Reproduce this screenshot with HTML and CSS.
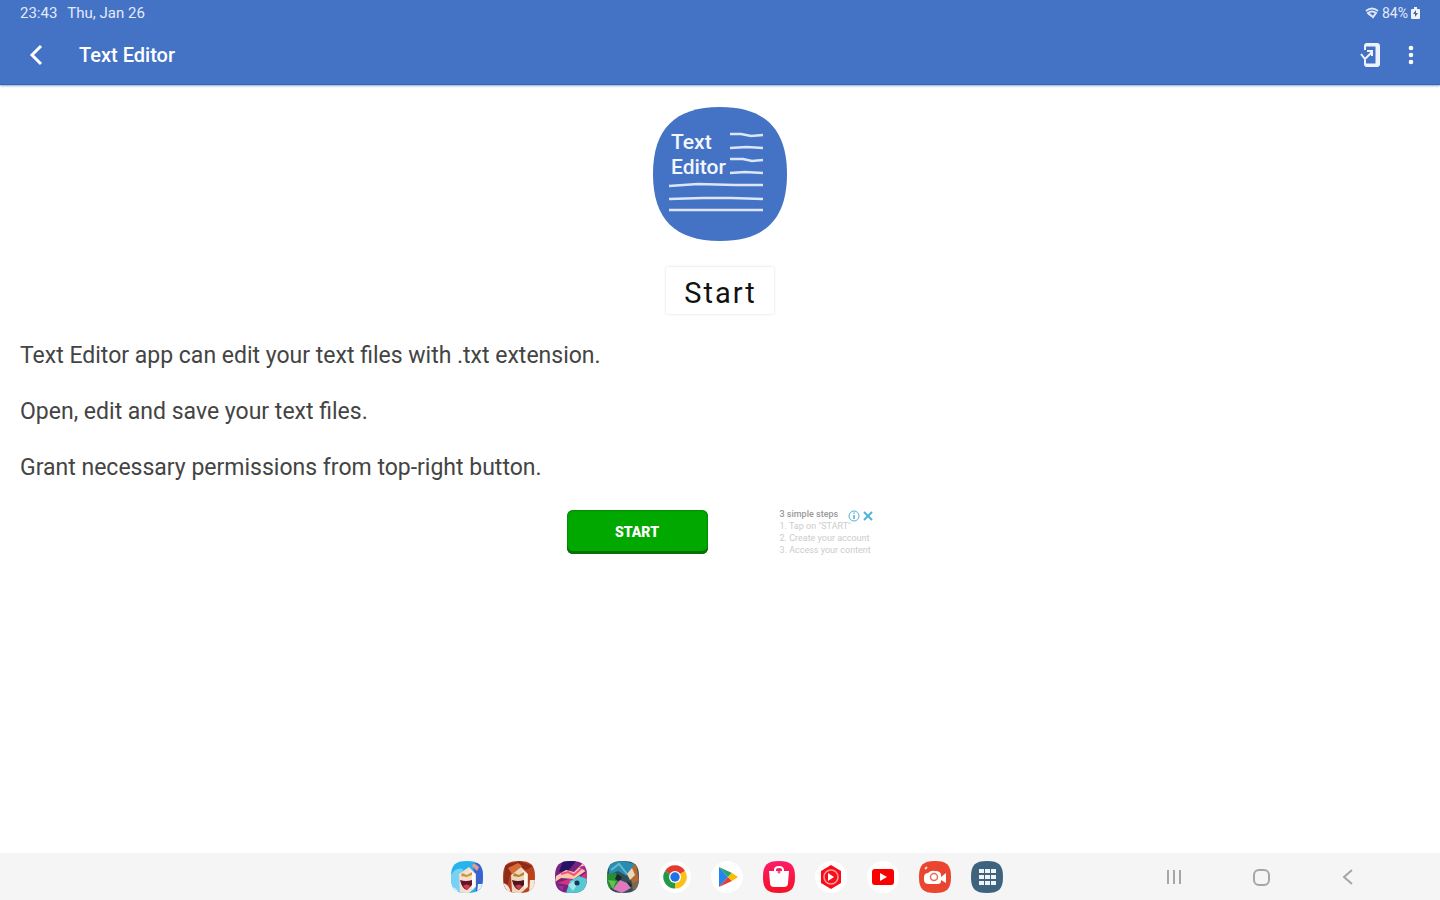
FILE: index.html
```html
<!DOCTYPE html>
<html lang="en">
<head>
    <meta charset="UTF-8">
    <meta name="viewport" content="width=device-width, initial-scale=1.0">
    <title>Text Editor</title>
    <link rel="stylesheet" href="styles.css">
</head>
<body>
    <header class="app-header">
        <div class="status-bar">
            <div class="status-left">
                <span>23:43</span>
                <span>Thu, Jan 26</span>
            </div>
            <div class="status-right">
                <svg width="14" height="12" viewBox="0 0 14 12" fill="none" stroke="#dde6fa" stroke-width="2">
                    <path d="M1 4 Q7 -1 13 4 M3 6 Q7 3 11 6 L8 10 Z"/>
                    <path d="M3 7 L9 11" stroke-width="1"/>
                </svg>
                <span>84%</span>
                <svg width="9" height="12" viewBox="0 0 9 12">
                    <path d="M3 0h3v2h2q1 0 1 1v8q0 1-1 1H1q-1 0-1-1V3q0-1 1-1h2z" fill="#eef3ff"/>
                    <path d="M5 3 2 7h2v3l3-4H5z" fill="#4b6295"/>
                </svg>
            </div>
        </div>
        <div class="toolbar">
            <button class="icon-button" aria-label="Back">
                <svg width="24" height="24" viewBox="0 0 24 24" fill="none" stroke="#fff" stroke-width="3">
                    <path d="M17 3 8 12l9 9"/>
                </svg>
            </button>
            <h1>Text Editor</h1>
            <button class="icon-button" aria-label="Permissions">
                <svg width="24" height="24" viewBox="0 0 24 24" fill="none" stroke="#eef3ff">
                    <path d="M6 7V3q0-2 2-2h10q2 0 2 2v18q0 2-2 2H8q-2 0-2-2v-4" stroke-width="2"/>
                    <path d="M7 2h12M7 22h12" stroke-width="3"/>
                    <path d="M18 2v20" stroke-width="3"/>
                    <path d="m2 11 4 5 7-7M8 8h5v5" stroke-width="2"/>
                </svg>
            </button>
            <button class="icon-button" aria-label="More options">
                <svg width="24" height="24" viewBox="0 0 24 24" fill="#fff">
                    <circle cx="12" cy="5" r="2.3"/>
                    <circle cx="12" cy="12" r="2.3"/>
                    <circle cx="12" cy="19" r="2.3"/>
                </svg>
            </button>
        </div>
    </header>

    <main class="content">
        <svg class="app-logo" viewBox="0 0 134 134" role="img" aria-label="Text Editor logo">
            <path d="M67 0C112 0 134 22 134 67s-22 67-67 67S0 112 0 67 22 0 67 0z" fill="#4472c4"/>
            <g fill="#f2f6ff" class="logo-text">
                <text x="18" y="42">Text</text>
                <text x="18" y="67">Editor</text>
            </g>
            <g fill="none" stroke="#dce6fa" stroke-width="2.5">
                <path d="M77 27 88 27 98 29 110 28M77 41 94 40 110 41M77 52 90 52 99 54 110 53M77 66 92 65 110 66"/>
                <path d="M16 79 45 77 82 78 110 78M16 92 50 91 78 91 110 92M16 103 60 103 110 103"/>
            </g>
        </svg>

        <button class="start-button">Start</button>

        <div class="description">
            <p>Text Editor app can edit your text files with .txt extension.</p>
            <p>Open, edit and save your text files.</p>
            <p>Grant necessary permissions from top-right button.</p>
        </div>

        <aside class="ad">
            <button class="ad-button">START</button>
            <div class="ad-text">
                <strong>3 simple steps</strong>
                <span>1. Tap on "START"</span>
                <span>2. Create your account</span>
                <span>3. Access your content</span>
            </div>
            <div class="ad-badge">
                <svg width="12" height="12" viewBox="0 0 12 12" fill="none" stroke="#4db4d6">
                    <circle cx="6" cy="6" r="5"/>
                    <path d="M6 5v4M6 2.5v1.3" stroke-width="1.5"/>
                </svg>
                <svg width="12" height="12" viewBox="0 0 12 12" fill="none" stroke="#4db4d6" stroke-width="2">
                    <path d="m2 2 8 8M10 2l-8 8"/>
                </svg>
            </div>
        </aside>
    </main>

    <footer class="taskbar">
        <div class="apps">
            <button aria-label="Blue hero game">
                <svg viewBox="0 0 32 32">
                    <clipPath id="tile"><path d="M16 0C28 0 32 4 32 16s-4 16-16 16S0 28 0 16 4 0 16 0z"/></clipPath>
                    <g clip-path="url(#tile)">
                        <path d="M0 0h32v32H0z" fill="#27b4ec"/>
                        <path d="M0 14q5-8 12-6L9 32H0z" fill="#78d2f5"/>
                        <path d="M22 2h10v30h-7z" fill="#3864cf"/>
                        <path d="M23 2l5 4-2 4-5-5z" fill="#e79a91"/>
                        <path d="M8 13 18 6l7 7v13l-7 6H9z" fill="#f6dfcf"/>
                        <path d="M18 9l6 4v12l-3 3V15z" fill="#fff"/>
                        <path d="M11 12l5 2 5-3v3l-5 2-6-1z" fill="#c69c3a"/>
                        <path d="M9 19q6 2 12 0v5l-5 5q-5-1-7-10z" fill="#651529"/>
                        <path d="M12 25q4-3 7 0l-3 4z" fill="#d64159"/>
                        <path d="M0 26q5 0 8 6H0zM27 23h5v9h-6z" fill="#e7f2fb"/>
                    </g>
                </svg>
            </button>
            <button aria-label="Red hero game">
                <svg viewBox="0 0 32 32">
                    <g clip-path="url(#tile)">
                        <path d="M0 0h32v32H0z" fill="#b9411d"/>
                        <path d="M2 4 16 0l14 5-7 4-7-4-9 9-4 18H0z" fill="#8c2b19"/>
                        <path d="M5 7 15 2l4 3-10 8z" fill="#d86b35"/>
                        <path d="M8 14 18 6l7 7v13l-7 6H9z" fill="#f0d5bd"/>
                        <path d="M19 9l5 4v12l-3 3V15z" fill="#fff8ed"/>
                        <path d="M11 12l5 2 5-3v3l-5 2-6-1z" fill="#ad872f"/>
                        <path d="M9 19q6 2 12 0v5l-5 5q-5-1-7-10z" fill="#53131a"/>
                        <path d="M12 25q4-3 7 0l-3 4z" fill="#c43e51"/>
                        <path d="M0 22q6 1 8 10H0zM27 19h5v13h-6z" fill="#f3e8df"/>
                    </g>
                </svg>
            </button>
            <button aria-label="Unicorn game">
                <svg viewBox="0 0 32 32">
                    <g clip-path="url(#tile)">
                        <path d="M0 0h32v32H0z" fill="#78237f"/>
                        <path d="M8 0h13l-7 9-10 2z" fill="#261363"/>
                        <path d="M1 15 11 9l8 2 9-9 4 7-13 9-13-1-6 4z" fill="#ffc6ae"/>
                        <path d="M6 13l7-2 6 3 9-8" fill="none" stroke="#ed5478" stroke-width="2"/>
                        <path d="M2 22l12-4 7 1 11-8v8l-14 6z" fill="#d3327f"/>
                        <path d="M11 32l4-12 9-5 8 3v14z" fill="#55c8d3"/>
                        <path d="M13 24l5-4 4 4-4 6z" fill="#9ae7e5"/>
                        <circle cx="22" cy="22" r="2.5" fill="#193350"/>
                        <path d="M3 25h6l-2 5zM24 6l8-2v7z" fill="#a52b9c"/>
                    </g>
                </svg>
            </button>
            <button aria-label="Adventure game">
                <svg viewBox="0 0 32 32">
                    <g clip-path="url(#tile)">
                        <path d="M0 0h32v32H0z" fill="#344e55"/>
                        <path d="M2 2 16 0l12 3-8 12-9-5-9 4z" fill="#268eb5"/>
                        <path d="M4 9l8-6 8 10" fill="none" stroke="#69b9c8" stroke-width="2"/>
                        <path d="M0 13l9-1 5 7-6 8H0z" fill="#278e35"/>
                        <path d="M1 19l8 1-3 8z" fill="#61c34d"/>
                        <path d="M21 11l8-9 3 18-6 4z" fill="#b66830"/>
                        <path d="M20 13l5-6 3 7-5 5z" fill="#ead8be"/>
                        <path d="M10 13l5 3-2 5-5-3zM20 20l5 4-3 5z" fill="#182929"/>
                        <path d="M6 28l7-9 7 3 4 5-9 5z" fill="#df79bd"/>
                        <path d="M25 23l7-4v9l-6 4z" fill="#77665a"/>
                    </g>
                </svg>
            </button>
            <button aria-label="Chrome">
                <svg viewBox="0 0 32 32">
                    <circle cx="16" cy="16" r="16" fill="#fff"/>
                    <path d="M16 16 6 10A11.5 11.5 0 0 1 26 10z" fill="#e33b2e"/>
                    <path d="M16 16 26 10A11.5 11.5 0 0 1 16 27.5z" fill="#fbc116"/>
                    <path d="M16 16V27.5A11.5 11.5 0 0 1 6 10z" fill="#229a47"/>
                    <circle cx="16" cy="16" r="6" fill="#fff"/>
                    <circle cx="16" cy="16" r="4.7" fill="#1b73e8"/>
                </svg>
            </button>
            <button aria-label="Play Store">
                <svg viewBox="0 0 32 32">
                    <circle cx="16" cy="16" r="16" fill="#fff"/>
                    <path d="M8 6 17 16 8 26z" fill="#2684ef"/>
                    <path d="M8 6 21 12l-4 4z" fill="#29a567"/>
                    <path d="M8 26l9-10 4 4z" fill="#e33f35"/>
                    <path d="M21 12l6 4-6 4-4-4z" fill="#fbbc04"/>
                </svg>
            </button>
            <button aria-label="Galaxy Store">
                <svg viewBox="0 0 32 32">
                    <linearGradient id="store" x2="0" y2="1">
                        <stop stop-color="#fb1d69"/>
                        <stop offset="1" stop-color="#f51225"/>
                    </linearGradient>
                    <path d="M16 0C28 0 32 4 32 16s-4 16-16 16S0 28 0 16 4 0 16 0z" fill="url(#store)"/>
                    <path d="M12 12V9q0-3 4-3t4 3v3" fill="none" stroke="#fff" stroke-width="2"/>
                    <path d="M6 10h20l-1 12q0 4-4 4H11q-4 0-4-4z" fill="#fff"/>
                    <circle cx="16" cy="11" r="1.5" fill="#f8537b"/>
                </svg>
            </button>
            <button aria-label="YouTube Music">
                <svg viewBox="0 0 32 32">
                    <circle cx="16" cy="16" r="16" fill="#fff"/>
                    <path d="M16 4l5 3 5 3v12l-5 3-5 3-5-3-5-3V10l5-3z" fill="#fa0d18"/>
                    <circle cx="16" cy="16" r="7" fill="none" stroke="#ff9da0" stroke-width="1.5"/>
                    <path d="M13 12l6 4-6 4z" fill="#fff"/>
                </svg>
            </button>
            <button aria-label="YouTube">
                <svg viewBox="0 0 32 32">
                    <circle cx="16" cy="16" r="16" fill="#fff"/>
                    <rect x="5" y="8" width="22" height="16" rx="3" fill="#fa0000"/>
                    <path d="M13 12l7 4-7 4z" fill="#fff"/>
                </svg>
            </button>
            <button aria-label="Screen recorder">
                <svg viewBox="0 0 32 32">
                    <path d="M16 0C28 0 32 4 32 16s-4 16-16 16S0 28 0 16 4 0 16 0z" fill="#e9452f"/>
                    <path d="M6 8l2-2" stroke="#ffd5ca" stroke-width="2"/>
                    <path d="M5 15q1-3 4-3 3-3 7-2 6 0 6 4v6q0 3-3 3h-9q-5 0-5-4z" fill="#fff"/>
                    <path d="M22 16l5-4v10l-5-3z" fill="#fff"/>
                    <circle cx="15" cy="16" r="3.5" fill="none" stroke="#ea6d59" stroke-width="1.5"/>
                </svg>
            </button>
            <button aria-label="All apps">
                <svg viewBox="0 0 32 32">
                    <path d="M16 0C28 0 32 4 32 16s-4 16-16 16S0 28 0 16 4 0 16 0z" fill="#3d637f"/>
                    <path d="M8 10h17M8 16h17M8 22h17" stroke="#edf3f7" stroke-width="4" stroke-dasharray="5 1"/>
                </svg>
            </button>
        </div>
        <nav class="nav-buttons" aria-label="System navigation">
            <button aria-label="Recent apps">
                <svg viewBox="0 0 32 32" fill="none" stroke="#a6a6a6" stroke-width="2">
                    <path d="M10 9v14M16 9v14M22 9v14"/>
                </svg>
            </button>
            <button aria-label="Home">
                <svg viewBox="0 0 32 32" fill="none" stroke="#a6a6a6" stroke-width="2">
                    <rect x="9" y="9" width="15" height="15" rx="5"/>
                </svg>
            </button>
            <button aria-label="Back">
                <svg viewBox="0 0 32 32" fill="none" stroke="#a6a6a6" stroke-width="2">
                    <path d="M20 9l-8 7 8 7"/>
                </svg>
            </button>
        </nav>
    </footer>
</body>
</html>
```

FILE: styles.css
```css
* {
    box-sizing: border-box;
}
body {
    font-family: Roboto, "Liberation Sans", sans-serif;
    margin: 0;
    min-height: 100vh;
    display: flex;
    flex-direction: column;
    background-color: #fff;
    color: #444;
}
button {
    font-family: inherit;
    border: none;
    padding: 0;
    background: none;
    cursor: pointer;
}
svg {
    display: block;
}
.app-header {
    background-color: #4472c4;
    color: #fff;
    border-bottom: 1px solid #2f64bd;
    box-shadow: 0 1px 2px rgba(50,80,150,0.5);
}
.status-bar {
    display: flex;
    justify-content: space-between;
    align-items: center;
    height: 26px;
    padding: 0 20px;
    font-size: 15px;
    color: #e2eafb;
}
.status-left {
    display: flex;
    gap: 10px;
}
.status-right {
    display: flex;
    align-items: center;
    gap: 3px;
    font-size: 14px;
}
.toolbar {
    display: flex;
    align-items: center;
    height: 58px;
    padding: 0 17px 0 24px;
    gap: 16px;
}
.toolbar h1 {
    flex: 1;
    margin: 0;
    padding-left: 15px;
    font-size: 20px;
    font-weight: 500;
}
.content {
    flex: 1;
    display: flex;
    flex-direction: column;
    align-items: center;
    padding-top: 22px;
}
.app-logo {
    width: 134px;
    height: 134px;
}
.logo-text {
    font-size: 21px;
    font-weight: 500;
}
.start-button {
    margin-top: 26px;
    height: 47px;
    padding: 4px 17px 0 18px;
    border-radius: 2px;
    background-color: #fff;
    box-shadow: 0 0 3px rgba(0,0,0,0.15);
    color: #111;
    font-size: 29px;
    letter-spacing: 2px;
}
.description {
    align-self: stretch;
    display: flex;
    flex-direction: column;
    gap: 28px;
    padding: 0 20px;
    margin-top: 28px;
    font-size: 23px;
    line-height: 28px;
}
.description p {
    margin: 0;
}
.ad {
    position: relative;
    display: flex;
    gap: 72px;
    margin-top: 26px;
}
.ad-button {
    width: 141px;
    height: 44px;
    margin-top: 2px;
    border-radius: 6px;
    background-color: #00a800;
    box-shadow: inset 0 -3px 0 #087008, inset 0 0 2px #064c06;
    color: #fff;
    font-size: 14px;
    font-weight: 900;
}
.ad-text {
    display: flex;
    flex-direction: column;
    width: 94px;
    font-size: 9px;
    line-height: 12px;
    color: #ccc;
    white-space: nowrap;
}
.ad-text strong {
    color: #999;
    font-weight: 500;
}
.ad-badge {
    position: absolute;
    top: 2px;
    right: 0;
    display: flex;
    gap: 2px;
    background-color: #fff;
}
.taskbar {
    display: grid;
    grid-template-columns: 1fr auto 1fr;
    align-items: center;
    height: 47px;
    padding-left: 14px;
    background-color: #f5f5f5;
}
.taskbar svg {
    width: 32px;
    height: 32px;
}
.apps {
    grid-column: 2;
    display: flex;
    gap: 20px;
}
.nav-buttons {
    display: flex;
    justify-content: flex-end;
    gap: 55px;
    padding-right: 76px;
}
```
